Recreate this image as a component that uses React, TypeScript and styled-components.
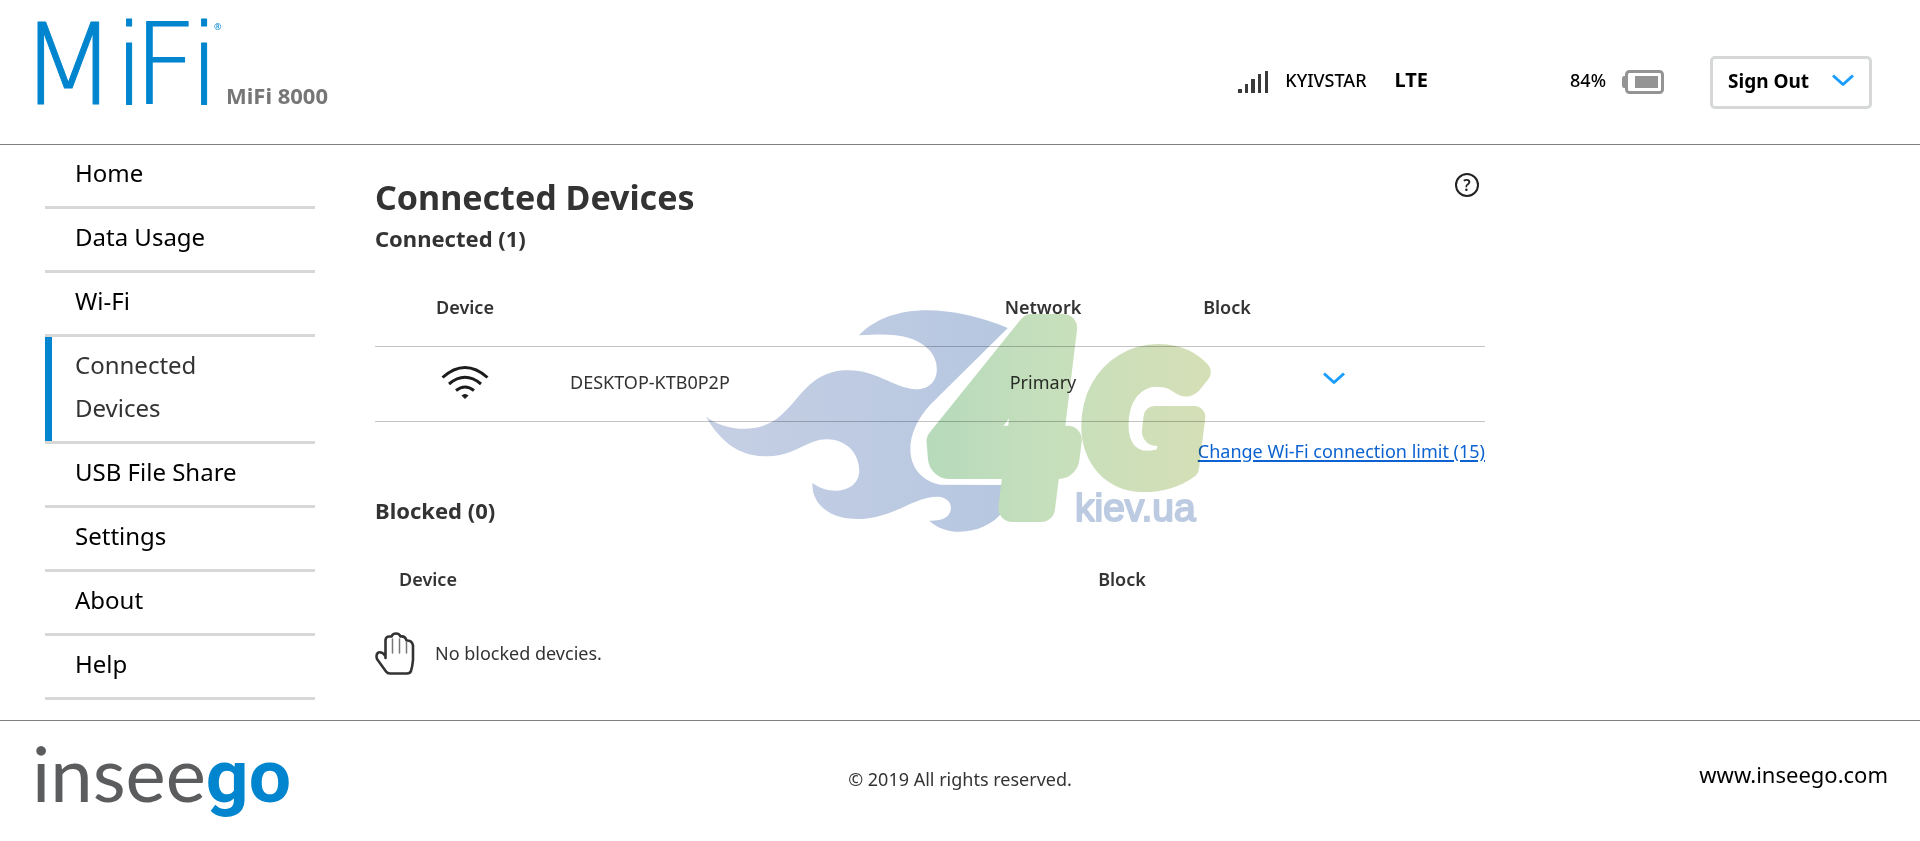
import React from 'react';
import styled, { createGlobalStyle } from 'styled-components';

const BLUE = '#0085ce';
const TEXT = '#333333';

const GlobalStyle = createGlobalStyle`
  *, *::before, *::after { box-sizing: border-box; }
  body {
    margin: 0;
    background: #fff;
    color: ${TEXT};
    font-family: "Noto Sans", "Open Sans", sans-serif;
    font-size: 18px;
    line-height: 24px;
  }
`;

const Page = styled.div`
  min-height: 100vh;
  display: flex;
  flex-direction: column;
`;

const Header = styled.header`
  display: flex;
  justify-content: space-between;
  height: 145px;
  padding: 0 48px 0 32px;
  border-bottom: 1px solid #808080;
`;

const Brand = styled.div`
  display: flex;
  align-items: flex-end;
  gap: 2px;
  padding-bottom: 36px;
`;

const ModelName = styled.span`
  color: #767676;
  font-size: 22px;
  font-weight: 700;
  line-height: 26px;
`;

const Status = styled.div`
  display: flex;
  align-items: center;
  padding-top: 20px;
  color: #000;
`;

const StatusText = styled.span`
  padding-bottom: 4px;
  font-weight: 500;
`;

const Carrier = styled(StatusText)`
  margin: 0 28px 0 16px;
`;

const Technology = styled(StatusText)`
  margin-right: 142px;
  font-size: 20px;
  font-weight: 700;
`;

const Charge = styled(StatusText)`
  margin-right: 16px;
`;

const SignOut = styled.button`
  display: flex;
  align-items: center;
  justify-content: space-between;
  width: 162px;
  height: 53px;
  margin-left: 46px;
  padding: 0 15px 3px;
  border: 3px solid #d6d8d8;
  border-radius: 5px;
  background: #fff;
  color: #000;
  font-family: inherit;
  font-size: 19px;
  font-weight: 700;
`;

const Body = styled.div`
  display: flex;
  align-items: flex-start;
  gap: 60px;
  padding: 0 45px 20px;
`;

const Nav = styled.nav`
  flex: 0 0 270px;
`;

const NavList = styled.ul`
  margin: 0;
  padding: 0;
  list-style: none;
`;

const NavItem = styled.li`
  border-bottom: 3px solid #d8d8d8;
`;

const NavLink = styled.a<{ $active?: boolean }>`
  display: block;
  padding: 6px 60px 12px ${p => (p.$active ? 23 : 30)}px;
  border-left: ${p => (p.$active ? `7px solid ${BLUE}` : 'none')};
  color: ${p => (p.$active ? TEXT : '#000')};
  font-size: 24px;
  line-height: 43px;
  text-decoration: none;
`;

const Content = styled.main`
  position: relative;
  flex: 1 1 0;
  max-width: 1110px;
`;

const TitleRow = styled.div`
  display: flex;
  align-items: flex-start;
  justify-content: space-between;
  padding: 28px 6px 6px 0;
`;

const Title = styled.h1`
  margin: 4px 0 0;
  font-size: 34px;
  line-height: 40px;
`;

const HelpButton = styled.button`
  display: flex;
  padding: 0;
  border: 0;
  background: none;
`;

const SectionTitle = styled.h2`
  margin: 0 0 15px;
  font-size: 22px;
  line-height: 30px;
`;

const Table = styled.table`
  width: 100%;
  border-collapse: collapse;
  table-layout: fixed;
`;

const Column = styled.col<{ $width?: number }>`
  width: ${p => (p.$width ? `${p.$width}px` : 'auto')};
`;

const HeadCell = styled.th<{ $ruled?: boolean }>`
  height: 78px;
  padding: 0;
  border-bottom: ${p => (p.$ruled ? '1px solid #c3c3c3' : 'none')};
  font-weight: 600;
`;

const Cell = styled.td<{ $align?: string; $ruled?: boolean }>`
  height: 75px;
  padding: 0 0 4px;
  border-bottom: ${p => (p.$ruled ? '1px solid #c3c3c3' : 'none')};
  text-align: ${p => p.$align ?? 'left'};

  svg { display: block; }
`;

const DeviceIcon = styled.span`
  display: flex;
  justify-content: center;
`;

const NameCell = styled(Cell)`
  padding-left: 15px;
`;

const ExpandCell = styled(Cell)`
  padding-bottom: 10px;
`;

const ExpandButton = styled.button`
  display: block;
  padding: 0 0 0 2px;
  border: 0;
  background: none;
`;

const LimitRow = styled.div`
  display: flex;
  justify-content: flex-end;
  padding: 17px 0 32px;
`;

const LimitLink = styled.a`
  color: #0b62d0;
  text-decoration-thickness: 2px;
  text-underline-offset: 2px;
`;

const Watermark = styled.svg`
  position: absolute;
  top: 145px;
  left: 315px;
  overflow: visible;
  pointer-events: none;
  mix-blend-mode: multiply;
`;

const Logo = styled.svg`
  display: block;
  overflow: visible;
`;

const Footer = styled.footer`
  display: grid;
  grid-template-columns: 1fr auto 1fr;
  align-items: center;
  height: 121px;
  padding: 0 32px;
  border-top: 1px solid #808080;
`;

const Copyright = styled.span`
  padding-bottom: 4px;
`;

const Site = styled.a`
  justify-self: end;
  padding-bottom: 14px;
  color: #000;
  font-size: 22px;
  text-decoration: none;
`;

const MifiLogo = () => (
  <Logo width="192" height="92" viewBox="32 16 192 92" role="img" aria-label="MiFi">
    <text
      x="20 114 133 189"
      y="104"
      fill={BLUE}
      stroke={BLUE}
      strokeWidth="1"
      strokeLinejoin="round"
      fontFamily="DejaVu Sans"
      fontWeight="200"
      fontSize="112"
    >
      MiFi
    </text>
    <text x="214" y="30" fill={BLUE} fontFamily="Noto Sans" fontSize="9">®</text>
  </Logo>
);

const InseegoLogo = () => (
  <Logo width="262" height="80" viewBox="32 740 262 80" role="img" aria-label="inseego">
    <text x="32" y="801" fill="#5b5c5e" fontFamily="Lato" fontSize="76">
      insee<tspan fill={BLUE} fontFamily="Roboto" fontWeight="700" fontSize="75">go</tspan>
    </text>
  </Logo>
);

const Chevron = () => (
  <svg width="22" height="13" viewBox="0 0 22 13" fill="none" stroke="#1a9dff" strokeWidth="3">
    <path d="M1 1.5 L11 10.5 L21 1.5" strokeLinejoin="round" />
  </svg>
);

const SignalIcon = () => (
  <svg width="31" height="23" viewBox="0 0 31 23" fill="#3a3a3a">
    <rect x="0" y="18" width="4" height="4" />
    <rect x="7" y="13" width="3" height="9" />
    <rect x="13" y="8" width="4" height="14" />
    <rect x="20" y="3" width="3" height="19" />
    <rect x="27" y="0" width="3" height="22" />
  </svg>
);

const BatteryIcon = () => (
  <svg width="42" height="24" viewBox="0 0 42 24">
    <rect x="4.5" y="1.5" width="36" height="21" rx="3" fill="#fff" stroke="#949494" strokeWidth="3" />
    <path d="M4 6H2Q0 6 0 9V15Q0 18 2 18H4Z" fill="#949494" />
    <rect x="13" y="6" width="23" height="12" fill="#949494" />
  </svg>
);

const WifiIcon = () => (
  <svg width="50" height="36" viewBox="0 0 50 36" fill="none" stroke="#1c1c1c" strokeWidth="3">
    <path d="M2.500 13.500Q25 -6.500 47.500 13.500" />
    <path d="M9 20Q25 6.500 41 20" />
    <path d="M16 26.500Q25 19.500 34 26.500" />
    <path d="M22 31.500Q25 29.500 28 31.500L25 34.500Z" fill="#1c1c1c" strokeWidth="1" />
  </svg>
);

const HandIcon = () => (
  <svg width="40" height="43" viewBox="0 0 40 43" fill="none" stroke="#333" strokeWidth="2.600" strokeLinejoin="round" strokeLinecap="round">
    <path d="M10.500 26V8Q11 4.500 14 4.500L16.500 4.500Q17.500 1.500 21 1.500Q24.500 1.500 25.500 4.500Q30 3.500 31.500 8.500Q37 8 38 13.500V28Q37.500 34 36 39Q35 41.500 32 41.500H15Q12.500 41.500 11 39.500L2 27Q0.500 22 3.500 20.500Q7 19.500 10.500 24" />
    <path d="M17.500 7V21M24.500 7V21M31.500 10V21" strokeWidth="1.500" stroke="#777" />
  </svg>
);

const HelpIcon = () => (
  <Logo width="24" height="24" viewBox="0 0 24 24">
    <circle cx="12" cy="12" r="11" fill="#fff" stroke="#222" strokeWidth="2" />
    <text x="12" y="18" textAnchor="middle" fill="#222" fontFamily="Noto Sans" fontWeight="600" fontSize="16">?</text>
  </Logo>
);

const FourGMark = () => (
  <Watermark width="560" height="260" viewBox="0 0 560 260" role="img" aria-label="4G kiev.ua">
    <defs>
      <linearGradient id="flame" gradientUnits="userSpaceOnUse" x1="45" y1="0" x2="890" y2="0">
        <stop offset="0" stopColor="#c6cfe4" />
        <stop offset="1" stopColor="#b6c7e0" />
      </linearGradient>
      <linearGradient id="leaf" gradientUnits="userSpaceOnUse" x1="235" y1="0" x2="527" y2="0">
        <stop offset="0" stopColor="#b6dabb" />
        <stop offset="0.400" stopColor="#c5dfbc" />
        <stop offset="1" stopColor="#d6dfb6" />
      </linearGradient>
    </defs>
    <g transform="scale(0.3571 0.3333)">
      <path
        fill="url(#flame)"
        d="M473 136C560 40 720 40 890 114L672 345C590 440 600 560 700 584L888 585Q876 640 879 661C830 735 720 745 670 692C730 695 735 660 728 640C705 600 640 630 600 650C520 690 480 690 440 685C375 675 340 630 343 579C395 620 470 605 474 545C475 470 410 430 345 455C300 475 270 498 215 499C130 500 80 445 45 380C100 425 190 430 245 385C310 330 330 250 430 241C520 235 560 290 630 298C700 300 705 220 670 180C625 130 560 130 473 136Z"
      />
    </g>
    <g
      fill="url(#leaf)"
      stroke="url(#leaf)"
      strokeLinejoin="round"
      fontFamily="Lato"
      fontWeight="900"
      fontStyle="italic"
    >
      <text x="246" y="218" fontSize="248" strokeWidth="28">4</text>
      <text x="396" y="190" fontSize="170" strokeWidth="22">G</text>
    </g>
    <text
      x="385"
      y="231"
      fill="#bccbe2"
      stroke="#bccbe2"
      strokeWidth="2"
      strokeLinejoin="round"
      fontFamily="Liberation Sans"
      fontSize="39"
    >
      kiev.ua
    </text>
  </Watermark>
);

const NAV = ['Home', 'Data Usage', 'Wi-Fi', 'Connected Devices', 'USB File Share', 'Settings', 'About', 'Help'];

export default function App() {
  return (
    <Page>
      <GlobalStyle />
      <Header>
        <Brand>
          <MifiLogo />
          <ModelName>MiFi 8000</ModelName>
        </Brand>
        <Status>
          <SignalIcon />
          <Carrier>KYIVSTAR</Carrier>
          <Technology>LTE</Technology>
          <Charge>84%</Charge>
          <BatteryIcon />
          <SignOut type="button">
            Sign Out
            <Chevron />
          </SignOut>
        </Status>
      </Header>

      <Body>
        <Nav aria-label="Main">
          <NavList>
            {NAV.map(label => (
              <NavItem key={label}>
                <NavLink href="#" $active={label === 'Connected Devices'}>{label}</NavLink>
              </NavItem>
            ))}
          </NavList>
        </Nav>

        <Content>
          <TitleRow>
            <Title>Connected Devices</Title>
            <HelpButton type="button" aria-label="Help"><HelpIcon /></HelpButton>
          </TitleRow>

          <SectionTitle>Connected (1)</SectionTitle>
          <Table>
            <colgroup>
              <Column $width={180} />
              <Column />
              <Column $width={180} />
              <Column $width={188} />
              <Column $width={164} />
            </colgroup>
            <thead>
              <tr>
                <HeadCell $ruled scope="col">Device</HeadCell>
                <HeadCell $ruled as="td" />
                <HeadCell $ruled scope="col">Network</HeadCell>
                <HeadCell $ruled scope="col">Block</HeadCell>
                <HeadCell $ruled as="td" />
              </tr>
            </thead>
            <tbody>
              <tr>
                <Cell $ruled><DeviceIcon><WifiIcon /></DeviceIcon></Cell>
                <NameCell $ruled>DESKTOP-KTB0P2P</NameCell>
                <Cell $ruled $align="center">Primary</Cell>
                <Cell $ruled />
                <ExpandCell $ruled>
                  <ExpandButton type="button" aria-label="Show device details"><Chevron /></ExpandButton>
                </ExpandCell>
              </tr>
            </tbody>
          </Table>
          <LimitRow>
            <LimitLink href="#">Change Wi-Fi connection limit (15)</LimitLink>
          </LimitRow>

          <SectionTitle>Blocked (0)</SectionTitle>
          <Table>
            <colgroup>
              <Column $width={60} />
              <Column $width={46} />
              <Column />
              <Column $width={180} />
              <Column $width={273} />
            </colgroup>
            <thead>
              <tr>
                <HeadCell colSpan={2} scope="col">Device</HeadCell>
                <HeadCell as="td" />
                <HeadCell scope="col">Block</HeadCell>
                <HeadCell as="td" />
              </tr>
            </thead>
            <tbody>
              <tr>
                <Cell><HandIcon /></Cell>
                <Cell colSpan={4}>No blocked devcies.</Cell>
              </tr>
            </tbody>
          </Table>
          <FourGMark />
        </Content>
      </Body>

      <Footer>
        <InseegoLogo />
        <Copyright>© 2019 All rights reserved.</Copyright>
        <Site href="#">www.inseego.com</Site>
      </Footer>
    </Page>
  );
}
